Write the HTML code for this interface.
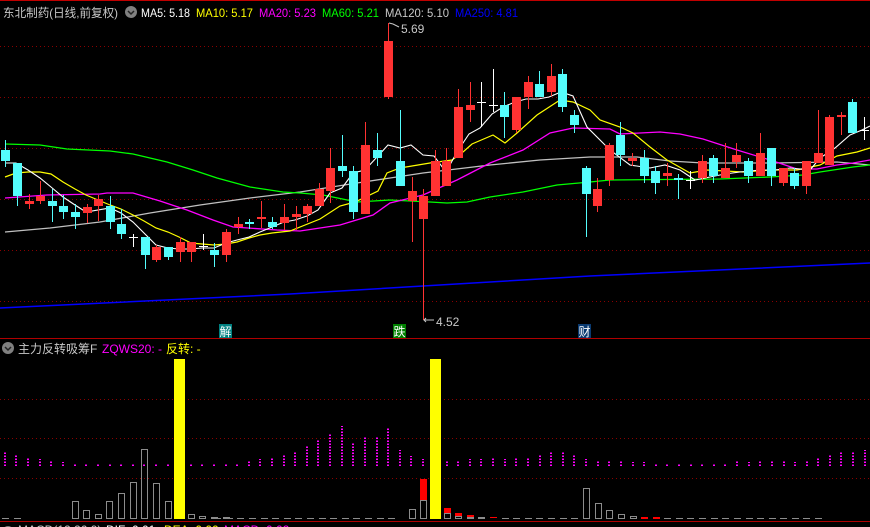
<!DOCTYPE html>
<html><head><meta charset="utf-8"><style>
html,body{margin:0;padding:0;background:#000;width:870px;height:527px;overflow:hidden}
svg{display:block}
text{font-family:"Liberation Sans","Noto Sans CJK SC",sans-serif;font-size:12px}
</style></head><body>
<svg width="870" height="527" viewBox="0 0 870 527" xmlns="http://www.w3.org/2000/svg">
<rect width="870" height="527" fill="#000"/>
<line x1="0" y1="0.5" x2="870" y2="0.5" stroke="#c00000"/>
<line x1="0" y1="338.5" x2="870" y2="338.5" stroke="#b00000"/>
<line x1="0" y1="521.5" x2="870" y2="521.5" stroke="#b00000"/>
<g stroke="#8a0000" stroke-dasharray="1,3">
<line x1="0" y1="46.5" x2="870" y2="46.5"/><line x1="0" y1="97.5" x2="870" y2="97.5"/><line x1="0" y1="148.5" x2="870" y2="148.5"/><line x1="0" y1="199.5" x2="870" y2="199.5"/><line x1="0" y1="250.5" x2="870" y2="250.5"/><line x1="0" y1="301.5" x2="870" y2="301.5"/>
<line x1="0" y1="399.5" x2="870" y2="399.5"/><line x1="0" y1="438.5" x2="870" y2="438.5"/><line x1="0" y1="478.5" x2="870" y2="478.5"/>
</g>
<text x="3" y="17" fill="#c8c8c8" textLength="115" lengthAdjust="spacingAndGlyphs">东北制药(日线,前复权)</text>
<circle cx="131" cy="12" r="6" fill="#808080"/><path d="M128 11l3 3 3-3" stroke="#222" stroke-width="1.5" fill="none"/>
<text x="141" y="17" fill="#fff" textLength="49" lengthAdjust="spacingAndGlyphs">MA5: 5.18</text>
<text x="196" y="17" fill="#ffff00" textLength="57" lengthAdjust="spacingAndGlyphs">MA10: 5.17</text>
<text x="259" y="17" fill="#ff00ff" textLength="57" lengthAdjust="spacingAndGlyphs">MA20: 5.23</text>
<text x="322" y="17" fill="#00ff00" textLength="57" lengthAdjust="spacingAndGlyphs">MA60: 5.21</text>
<text x="385" y="17" fill="#c8c8c8" textLength="64" lengthAdjust="spacingAndGlyphs">MA120: 5.10</text>
<text x="455" y="17" fill="#0000ff" textLength="63" lengthAdjust="spacingAndGlyphs">MA250: 4.81</text>
<polyline fill="none" stroke="#0000ff" stroke-width="1.5" points="0,308 290,294 590,276 870,263"/>
<polyline fill="none" stroke="#c0c0c0" stroke-width="1.3" points="5,232 50,228 100,222 150,213 200,205 250,198 300,192 357,183 423,173 490,165 540,160 590,157 637,157 670,161 703,163 770,163 837,162 870,165"/>
<polyline fill="none" stroke="#00ff00" stroke-width="1.3" points="5,144 40,145 67,149 110,151 133,154 167,162 193,170 217,178 250,187 283,192 300,193 323,195 357,202 390,200 430,202 447,203 467,202 490,197 523,192 557,185 590,182 610,180 720,179 770,177 803,175 820,172 853,167 870,165"/>
<polyline fill="none" stroke="#ff00ff" stroke-width="1.3" points="5,198 47,195 100,194 107,193 133,193 160,201 187,210 213,220 233,227 277,230 300,231 340,225 373,215 390,203 423,195 457,180 490,163 523,150 550,133 573,128 610,129 620,134 660,132 680,134 703,139 737,150 770,160 797,169 817,169 837,165 853,163 870,160"/>
<polyline fill="none" stroke="#ffff00" stroke-width="1.2" points="5,177 16,173 28,172 40,172 51,174 63,182 75,189 86,195 98,200 110,205 121,209 133,215 144,221 156,228 168,232 179,237 191,243 202,244 214,245 226,244 237,242 249,238 260,235 272,233 290,231 320,219 340,206 355,202 378,191 387,173 400,168 430,163 452,160 463,152 472,144 493,135 505,143 517,133 537,115 560,100 573,102 590,110 600,120 620,127 633,133 650,147 667,160 690,173 707,170 743,172 770,170 797,170 820,165 837,156 857,152 870,148"/>
<polyline fill="none" stroke="#fff" stroke-width="1.1" points="5,163 16,163 28,170 40,178 51,187 63,197 75,205 86,212 110,208 121,213 133,222 144,233 156,245 168,248 179,249 191,249 202,248 214,248 226,243 237,240 249,237 260,232 272,227 284,222 295,220 307,216 318,210 330,193 342,188 353,173 365,170 377,157 388,145 400,148 411,145 423,155 434,156 446,172 457,152 469,134 480,128 492,114 503,107 515,102 526,99 538,99 549,97 561,92 573,96 587,127 610,150 630,165 650,168 665,165 680,170 695,180 710,177 725,174 740,172 760,170 775,170 790,168 810,170 820,158 835,148 850,135 862,130 870,126"/>
<g fill="#ff3232" stroke="none">
<path stroke="#ff3232" stroke-width="1" d="M29.5 194V209M40.5 181V204M87.5 204V223M98.5 195V221M156.5 245V262M180.5 237V262M191.5 242V262M226.5 229V262M238.5 217V234M261.5 201V228M284.5 204V230M296.5 206V230M307.5 204V222M319.5 183V206M330.5 148V203M365.5 122V214M388.5 23V99M412.5 177V242M423.5 189V320M435.5 150V196M446.5 148V186M458.5 89V158M470.5 82V122M516.5 97V133M528.5 76V109M551.5 64V96M597.5 178V212M609.5 143V186M632.5 153V166M667.5 163V186M702.5 155V183M725.5 143V178M736.5 143V168M760.5 133V176M783.5 168V186M806.5 161V194M818.5 110V163M829.5 115V165M841.5 112V135"/>
<rect x="25" y="201" width="9" height="3"/><rect x="36" y="196" width="9" height="5"/><rect x="83" y="207" width="9" height="6"/><rect x="94" y="199" width="9" height="7"/><rect x="152" y="247" width="9" height="13"/><rect x="176" y="242" width="9" height="10"/><rect x="187" y="242" width="9" height="10"/><rect x="222" y="232" width="9" height="23"/><rect x="234" y="224" width="9" height="3"/><rect x="257" y="217" width="9" height="2"/><rect x="280" y="217" width="9" height="6"/><rect x="292" y="214" width="9" height="3"/><rect x="303" y="206" width="9" height="8"/><rect x="315" y="189" width="9" height="17"/><rect x="326" y="168" width="9" height="23"/><rect x="361" y="145" width="9" height="69"/><rect x="384" y="41" width="9" height="56"/><rect x="408" y="191" width="9" height="10"/><rect x="419" y="196" width="9" height="23"/><rect x="431" y="161" width="9" height="35"/><rect x="442" y="161" width="9" height="25"/><rect x="454" y="107" width="9" height="51"/><rect x="466" y="105" width="9" height="5"/><rect x="512" y="97" width="9" height="33"/><rect x="524" y="82" width="9" height="15"/><rect x="547" y="76" width="9" height="16"/><rect x="593" y="189" width="9" height="17"/><rect x="605" y="145" width="9" height="35"/><rect x="628" y="158" width="9" height="3"/><rect x="663" y="173" width="9" height="3"/><rect x="698" y="161" width="9" height="17"/><rect x="721" y="168" width="9" height="10"/><rect x="732" y="155" width="9" height="7"/><rect x="756" y="153" width="9" height="23"/><rect x="779" y="168" width="9" height="15"/><rect x="802" y="161" width="9" height="25"/><rect x="814" y="153" width="9" height="10"/><rect x="825" y="117" width="9" height="48"/><rect x="837" y="115" width="9" height="2"/>
</g>
<g fill="#54fcfc">
<path stroke="#54fcfc" stroke-width="1" d="M5.5 140V167M17.5 163V206M52.5 189V222M63.5 195V219M75.5 204V229M110.5 196V229M121.5 209V239M145.5 237V269M168.5 247V260M214.5 243V267M249.5 219V229M272.5 217V229M342.5 135V177M353.5 166V219M377.5 133V166M400.5 110V186M504.5 92V138M539.5 71V97M562.5 69V112M574.5 110V133M586.5 166V237M620.5 122V166M644.5 150V183M655.5 166V194M678.5 174V199M713.5 155V183M748.5 158V183M771.5 148V186M794.5 168V189M852.5 99V133"/>
<rect x="1" y="150" width="9" height="11"/><rect x="13" y="163" width="9" height="33"/><rect x="48" y="201" width="9" height="5"/><rect x="59" y="206" width="9" height="6"/><rect x="71" y="212" width="9" height="5"/><rect x="106" y="206" width="9" height="16"/><rect x="117" y="224" width="9" height="10"/><rect x="141" y="237" width="9" height="18"/><rect x="164" y="247" width="9" height="10"/><rect x="210" y="250" width="9" height="5"/><rect x="245" y="222" width="9" height="2"/><rect x="268" y="222" width="9" height="5"/><rect x="338" y="166" width="9" height="5"/><rect x="349" y="171" width="9" height="41"/><rect x="373" y="150" width="9" height="8"/><rect x="396" y="161" width="9" height="25"/><rect x="500" y="105" width="9" height="12"/><rect x="535" y="84" width="9" height="13"/><rect x="558" y="74" width="9" height="33"/><rect x="570" y="115" width="9" height="10"/><rect x="582" y="168" width="9" height="26"/><rect x="616" y="135" width="9" height="20"/><rect x="640" y="158" width="9" height="18"/><rect x="651" y="171" width="9" height="12"/><rect x="674" y="178" width="9" height="2"/><rect x="709" y="158" width="9" height="18"/><rect x="744" y="161" width="9" height="15"/><rect x="767" y="148" width="9" height="28"/><rect x="790" y="173" width="9" height="13"/><rect x="848" y="102" width="9" height="31"/>
</g>
<path stroke="#fff" stroke-width="1" fill="none" d="M133.5 234V247M129 237.5H138M203.5 234V250M199 246.5H208M481.5 82V127M477 102.5H486M493.5 69V112M489 105.5H498M690.5 171V189M686 180.5H695M864.5 117V140M860 130.5H869"/>
<path d="M389 23l4 1 6 3" stroke="#c8c8c8" fill="none"/><text x="401" y="33" fill="#c8c8c8">5.69</text>
<path d="M424 320h10M426 318l-2 2 2 2" stroke="#c8c8c8" fill="none"/><text x="436" y="326" fill="#c8c8c8">4.52</text>
<rect x="219" y="324" width="13" height="14" fill="#008080"/><text x="219.5" y="336" fill="#fff">解</text>
<rect x="393" y="324" width="13" height="14" fill="#008000"/><text x="393.5" y="336" fill="#fff">跌</text>
<rect x="578" y="324" width="13" height="14" fill="#0a3a70"/><text x="578.5" y="336" fill="#fff">财</text>
<circle cx="8" cy="348" r="6" fill="#808080"/><path d="M5 347l3 3 3-3" stroke="#222" stroke-width="1.5" fill="none"/>
<text x="18" y="353" fill="#c8c8c8">主力反转吸筹F</text>
<text x="102" y="353" fill="#ff00ff">ZQWS20: -</text>
<text x="166" y="353" fill="#ffff00">反转: -</text>
<g stroke="#ff00ff" stroke-width="2" stroke-dasharray="1.5,1.5" fill="none">
<path d="M5 466V452M16 466V455M28 466V458M40 466V459M51 466V461M63 466V462M75 466V463M86 466V463M98 466V463M110 466V464M121 466V464M133 466V464M144 466V463M156 466V464M168 466V464M191 466V464M202 466V464M214 466V464M226 466V464M237 466V463M249 466V461M260 466V459M272 466V458M284 466V455M295 466V451M307 466V446M318 466V440M330 466V433M342 466V426M353 466V443M365 466V436M377 466V436M388 466V428M400 466V450M411 466V456M423 466V459M447 466V461M458 466V460M470 466V459M481 466V459M493 466V458M505 466V459M516 466V458M528 466V457M540 466V455M551 466V451M563 466V451M574 466V454M586 466V459M598 466V461M609 466V461M621 466V461M633 466V462M644 466V462M656 466V463M667 466V463M679 466V463M691 466V463M702 466V463M714 466V463M725 466V463M737 466V461M749 466V462M760 466V460M772 466V461M784 466V461M795 466V462M807 466V461M818 466V458M830 466V455M841 466V452M853 466V451M865 466V450"/>
</g>
<g fill="none" stroke="#8c8c8c" stroke-width="1">
<path d="M2 518.5H9M14 518.5H21M214 518.5H221M226 518.5H233M237 518.5H244M249 518.5H256M261 518.5H268M272 518.5H279M284 518.5H291M295 518.5H302M307 518.5H314M319 518.5H326M330 518.5H337M342 518.5H349M353 518.5H360M365 518.5H372M377 518.5H384M388 518.5H395M502 518.5H509M513 518.5H520M525 518.5H532M536 518.5H543M548 518.5H555M560 518.5H567M571 518.5H578M664 518.5H671M676 518.5H683M687 518.5H694M699 518.5H706M711 518.5H718M722 518.5H729M734 518.5H741M746 518.5H753M757 518.5H764M769 518.5H776M780 518.5H787M792 518.5H799M803 518.5H810M815 518.5H822"/>
<rect x="72.5" y="501.5" width="6" height="17"/><rect x="83.5" y="510.5" width="6" height="8"/><rect x="95.5" y="514.5" width="6" height="4"/><rect x="106.5" y="501.5" width="6" height="17"/><rect x="118.5" y="493.5" width="6" height="25"/><rect x="130.5" y="482.5" width="6" height="36"/><rect x="141.5" y="449.5" width="6" height="69"/><rect x="153.5" y="483.5" width="6" height="35"/><rect x="165.5" y="501.5" width="6" height="17"/><rect x="188.5" y="514.5" width="6" height="4"/><rect x="199.5" y="516.5" width="6" height="2"/><rect x="409.5" y="509.5" width="6" height="9"/><rect x="420.5" y="500.5" width="6" height="18"/><rect x="444.5" y="513.5" width="6" height="5"/><rect x="455.5" y="516.5" width="6" height="2"/><rect x="583.5" y="488.5" width="6" height="30"/><rect x="595.5" y="503.5" width="6" height="15"/><rect x="606.5" y="510.5" width="6" height="8"/><rect x="618.5" y="514.5" width="6" height="4"/><rect x="630.5" y="516.5" width="6" height="2"/>
</g>
<g fill="#8c8c8c"><rect x="211" y="517" width="7" height="2"/><rect x="223" y="517" width="7" height="2"/><rect x="467" y="517" width="7" height="2"/><rect x="478" y="517" width="7" height="2"/></g>
<g fill="#ff0000"><rect x="420" y="479" width="7" height="21"/><rect x="444" y="508" width="7" height="5"/><rect x="455" y="513" width="7" height="3"/><rect x="467" y="515" width="7" height="2"/><rect x="490" y="517" width="7" height="1"/><rect x="641" y="517" width="7" height="2"/><rect x="653" y="517" width="7" height="2"/></g>
<rect x="174" y="359" width="11" height="160" fill="#ffff00"/>
<rect x="430" y="359" width="11" height="160" fill="#ffff00"/>
<circle cx="8" cy="532" r="6" fill="#808080"/>
<text x="18" y="534" fill="#c8c8c8">MACD(12,26,9)</text>
<text x="106" y="534" fill="#fff">DIF: 0.01</text>
<text x="164" y="534" fill="#ffff00">DEA: 0.00</text>
<text x="224" y="534" fill="#ff00ff">MACD: 0.02</text>
</svg>
</body></html>
